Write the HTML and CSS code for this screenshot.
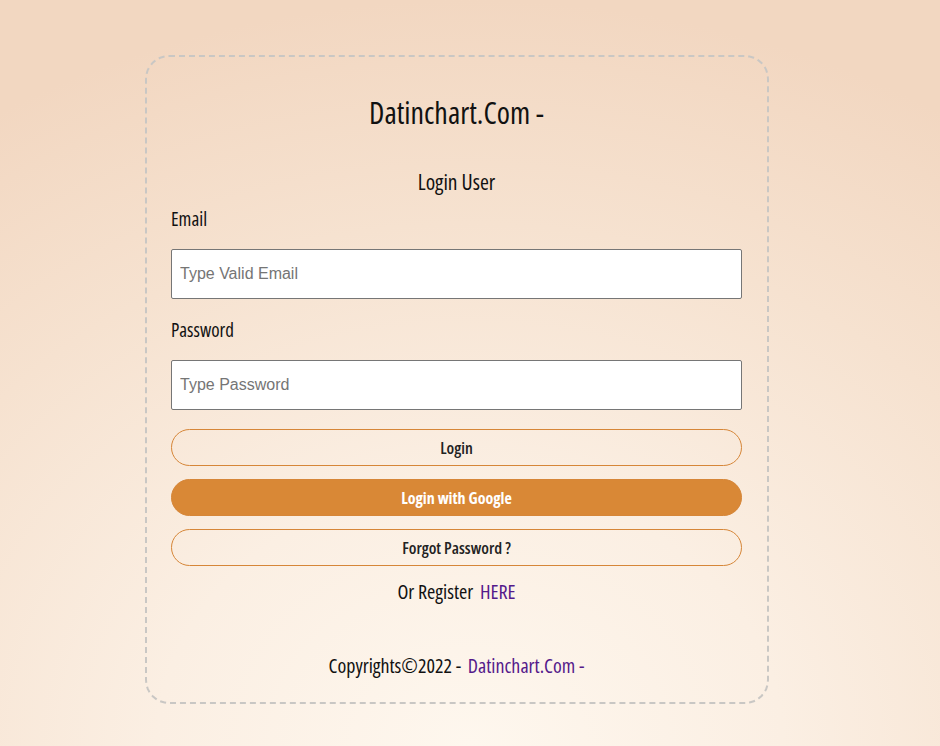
FILE: index.html
```html
<!DOCTYPE html>
<html lang="en">
<head>
<meta charset="utf-8">
<title>Login User</title>
<link rel="stylesheet" href="styles.css">
</head>
<body>
<main class="card">
  <h1 class="brand">Datinchart.Com -</h1>
  <h3 class="subtitle">Login User</h3>
  <form class="form">
    <label class="label" for="email">Email</label>
    <input class="field" id="email" type="email" placeholder="Type Valid Email">
    <label class="label label-pw" for="pw">Password</label>
    <input class="field" id="pw" type="password" placeholder="Type Password">
    <button class="btn btn-login" type="button">Login</button>
    <button class="btn btn-google" type="button">Login with Google</button>
    <button class="btn btn-forgot" type="button">Forgot Password ?</button>
  </form>
  <p class="register">Or Register <a class="link" href="#">HERE</a></p>
  <p class="copy">Copyrights&copy;2022 - <a class="link" href="#">Datinchart.Com -</a></p>
</main>
</body>
</html>
```
FILE: styles.css
```css
html, body {
  height: 100%;
}
body {
  margin: 0;
  background: radial-gradient(ellipse 95% 100% at 50% 100%, #fef7ee 0%, #fbefe3 35%, #f6e2d0 70%, #f2d7c1 100%);
  font-family: "Open Sans", "Roboto", sans-serif;
  font-stretch: 75%;
  color: #111;
  overflow: hidden;
}
.card {
  box-sizing: border-box;
  width: 624px;
  margin: 55px 0 0 145px;
  padding: 36px 25px 23px 24px;
  border: 2px dashed #c9c7c4;
  border-radius: 24px;
  display: flex;
  flex-direction: column;
}
.brand {
  margin: 0;
  font-size: 30px;
  font-weight: 400;
  line-height: 40px;
  text-align: center;
}
.subtitle {
  margin: 35px 0 0;
  font-size: 21.5px;
  font-weight: 400;
  line-height: 28px;
  text-align: center;
}
.form {
  display: flex;
  flex-direction: column;
}
.label {
  margin-top: 11px;
  font-size: 19px;
  line-height: 24px;
}
.label-pw {
  margin-top: 19px;
}
.field {
  box-sizing: border-box;
  margin-top: 18px;
  height: 50px;
  width: 100%;
  padding: 0 8px;
  border: 1px solid #767676;
  border-radius: 2px;
  background: #fff;
  font-family: "Liberation Sans", Arial, sans-serif;
  font-stretch: normal;
  font-size: 16px;
  color: #222;
}
.field::placeholder {
  color: #757575;
}
.btn {
  box-sizing: border-box;
  height: 37px;
  width: 100%;
  margin-top: 13px;
  border: 1px solid #d68638;
  border-radius: 19px;
  background: transparent;
  font-family: "Open Sans", "Roboto", sans-serif;
  font-stretch: 75%;
  font-size: 16.5px;
  font-weight: 600;
  color: #222;
  cursor: pointer;
}
.btn-login {
  margin-top: 19px;
}
.btn-google {
  background: #d98836;
  color: #fff;
  font-size: 16px;
  font-weight: 700;
}
.register {
  margin: 13px 0 0;
  font-size: 20px;
  line-height: 26px;
  text-align: center;
}
.copy {
  margin: 48px 0 0;
  font-size: 20px;
  line-height: 26px;
  text-align: center;
}
.link {
  color: #551a8b;
  text-decoration: none;
  margin-left: 3px;
}
```
